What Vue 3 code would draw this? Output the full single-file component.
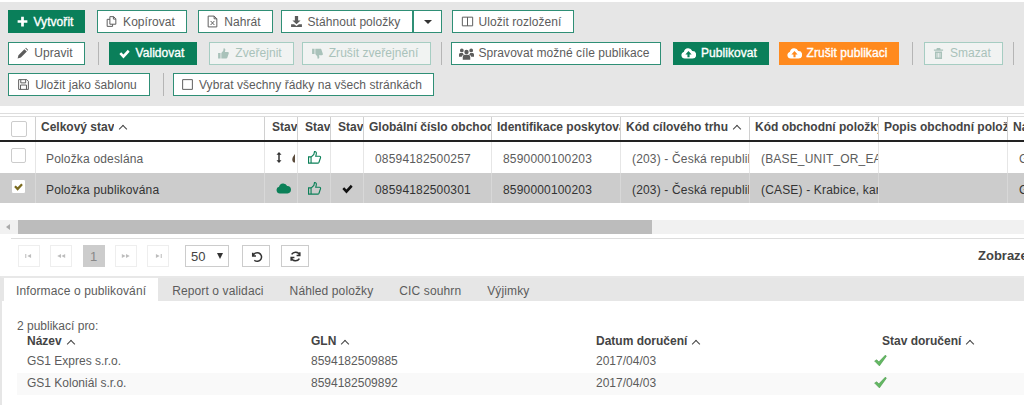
<script setup>
const ic = {
  plus: 'M9.5 3h5v6.5H21v5h-6.5V21h-5v-6.5H3v-5h6.5z',
  check: 'M2.5 13l3.4-3.4 4.2 4.2 8-8.6 3.4 3.4L10.1 21z',
  pencil: 'M3 21l1.5-6L15.5 4l4.5 4.5L9 19.500zM17 2.500l1.500-1 4 4-1 1.500z',
  up: 'M2 11h4.500v10H2zM8 11l3.500-4 .8-4.500c2.700-.3 3.500 2 2.900 4l-.7 2.500H20c1.600 0 2.300 1.400 1.800 2.700L19 20c-.4.800-1 1-2 1H8z',
  down: 'M2 3h4.500v10H2zM8 13l3.500 4 .8 4.500c2.700.3 3.500-2 2.900-4l-.7-2.500H20c1.600 0 2.300-1.400 1.800-2.700L19 4c-.4-.8-1-1-2-1H8z',
  users: 'M12 6a3.500 3.500 0 1 1 0 7 3.500 3.500 0 0 1 0-7zM4.500 4a3 3 0 1 1 0 6 3 3 0 0 1 0-6zM19.500 4a3 3 0 1 1 0 6 3 3 0 0 1 0-6zM6 22v-4c0-3 2-4 3-4h6c1 0 3 1 3 4v4zM0 17v-3c0-2 1-3 2.500-3h3.500c.5 1 1 2 2 2.500-2 .8-3.500 2-3.500 3.500zM24 17v-3c0-2-1-3-2.500-3H18c-.5 1-1 2-2 2.500 2 .8 3.500 2 3.500 3.500z',
  upload: 'M6 20a5.500 5.500 0 0 1-1.300-10.800A7 7 0 0 1 18 8a6 6 0 0 1 .5 12zM12 8l-5 5.500h3.300V18h3.400v-4.500H17z',
  cloud: 'M6 20a5.500 5.500 0 0 1-1.300-10.800A7 7 0 0 1 18 8a6 6 0 0 1 .5 12z',
  trash: 'M9 2h6l1 2.500h4.500v2.500h-17V4.500H8zM5.500 8.500h13V22h-13zM8.500 11v8.500h1.500V11zM11.300 11v8.500h1.500V11zM14 11v8.500h1.500V11z',
  download: 'M9 2h6v8h4.500L12 17 4.500 10H9zM2 17h5.500l4.500 3.500 4.500-3.500H22v5H2z',
  arrows: 'M12 1l5 5.500h-3.500v11H17l-5 5.500-5-5.500h3.500v-11H7z',
  sb: 'M3 7h2.500v10H3zM17 7v10l-9-5z',
  rw: 'M12 7v10l-9-5zM22 7v10l-9-5z',
  ff: 'M2 7v10l9-5zM12 7v10l9-5z',
  se: 'M18.500 7H21v10h-2.500zM7 7v10l9-5z'
}
const st = {
  copy: 'M9 3h7l4 4v10h-11zM15.500 3v4.500H20M9 8H4v13h10v-4',
  file: 'M4 2h11l5 5v15H4zM15 2v5h5M8.500 11l7 7.500M15.500 11l-7 7.500',
  cols: 'M2.500 4h19v16h-19zM12 4v16',
  save: 'M3 3h15l3 3v15H3zM7 3v6h9V3M6.500 21v-8h11v8',
  box: 'M3 3h18v18H3z',
  tup: 'M2.500 11h4v10h-4zM6.500 11.500L11 7l1-4.500c2.500-.3 3.500 2 2.800 4.200L14 10h6c1.500 0 2 1.400 1.600 2.500L19 20c-.3.800-1 1-2 1H6.500',
  undo: 'M5 5v6h6M5.500 11A8 8 0 1 1 8 19',
  sync: 'M20 4v6h-6M20 9.500A8.500 8.500 0 0 0 4.800 8M4 20v-6h6M4 14.500A8.500 8.500 0 0 0 19.200 16'
}
const rows = [
  [
    { t: 'Vytvořit', i: 'plus', k: 'solid', w: 77, m: 0 },
    { t: 'Kopírovat', s: 'copy', w: 90, m: 12 },
    { t: 'Nahrát', s: 'file', w: 75, m: 11 },
    { t: 'Stáhnout položky', i: 'download', w: 132, m: 8 },
    { caret: true, w: 29, m: 0 },
    { t: 'Uložit rozložení', s: 'cols', w: 122, m: 10 }
  ],
  [
    { t: 'Upravit', i: 'pencil', w: 77, m: 0 },
    { sep: true, m: 13 },
    { t: 'Validovat', i: 'check', k: 'solid', w: 88, m: 10 },
    { t: 'Zveřejnit', i: 'up', k: 'off', w: 85, m: 12 },
    { t: 'Zrušit zveřejnění', i: 'down', k: 'off', w: 129, m: 8 },
    { sep: true, m: 10 },
    { t: 'Spravovat možné cíle publikace', i: 'users', w: 210, m: 9, wide: true },
    { t: 'Publikovat', i: 'upload', k: 'solid', w: 96, m: 12, wide: true },
    { t: 'Zrušit publikaci', i: 'upload', k: 'warn', w: 120, m: 10, wide: true },
    { sep: true, m: 13 },
    { t: 'Smazat', i: 'trash', k: 'off', w: 79, m: 11 },
    { sep: true, m: 10 }
  ],
  [
    { t: 'Uložit jako šablonu', s: 'save', w: 142, m: 0 },
    { sep: true, m: 13 },
    { t: 'Vybrat všechny řádky na všech stránkách', s: 'box', w: 261, m: 9 }
  ]
]
const heads = [
  { t: 'Celkový stav', sort: true },
  { t: 'Stav', c: true }, { t: 'Stav', c: true }, { t: 'Stav', c: true },
  { t: 'Globální číslo obchodní položky' },
  { t: 'Identifikace poskytovatele' },
  { t: 'Kód cílového trhu', sort: true },
  { t: 'Kód obchodní položky' },
  { t: 'Popis obchodní položky' },
  { t: 'Název' }
]
const items = [
  { sel: false, name: 'Položka odeslána', gtin: '08594182500257', code: '(BASE_UNIT_OR_EACH)', g: 'G' },
  { sel: true, name: 'Položka publikována', gtin: '08594182500301', code: '(CASE) - Krabice, karton', g: 'G' }
]
const pager = [
  { i: 'sb' }, { i: 'rw' }, { n: '1' }, { i: 'ff' }, { i: 'se' }
]
const tabs = ['Informace o publikování', 'Report o validaci', 'Náhled položky', 'CIC souhrn', 'Výjimky']
const pubs = [
  { n: 'GS1 Expres s.r.o.', g: '8594182509885', d: '2017/04/03' },
  { n: 'GS1 Koloniál s.r.o.', g: '8594182509892', d: '2017/04/03' }
]
const pubHeads = ['Název', 'GLN', 'Datum doručení', 'Stav doručení']
</script>

<template>
  <div class="page">
    <section class="panel">
      <div v-for="(row, r) in rows" :key="r" class="barrow">
        <template v-for="(b, j) in row" :key="j">
          <span v-if="b.sep" class="sep" :style="{ marginLeft: b.m + 'px' }"></span>
          <button v-else class="btn" :class="[b.k, { bare: b.caret }]" :style="{ width: b.w + 'px', marginLeft: b.m + 'px' }">
            <span v-if="b.caret" class="caret"></span>
            <svg v-if="b.i" class="ico" :class="{ wide: b.wide }" viewBox="0 0 24 24"><path :d="ic[b.i]" fill="currentColor" fill-rule="evenodd" /></svg>
            <svg v-if="b.s" class="ico" viewBox="0 0 24 24"><path :d="st[b.s]" fill="none" stroke="currentColor" stroke-width="1.800" /></svg>
            <span v-if="b.t">{{ b.t }}</span>
          </button>
        </template>
      </div>
    </section>

    <section class="gridwrap">
      <div class="grow ghead">
        <div class="gc cb"><span class="box big"></span></div>
        <div v-for="(h, i) in heads" :key="i" class="gc hc" :class="{ ctr: h.c }">
          <span class="clip">{{ h.t }}</span><span v-if="h.sort" class="chev"></span>
        </div>
      </div>
      <div v-for="it in items" :key="it.gtin" class="grow body" :class="{ sel: it.sel }">
        <div class="gc cb"><span class="box" :class="{ on: it.sel }">
          <svg v-if="it.sel" viewBox="0 0 24 24"><path :d="ic.check" fill="#7a6a1e" /></svg>
        </span></div>
        <div class="gc bc name">{{ it.name }}</div>
        <div class="gc ic1">
          <svg v-if="it.sel" class="cl" viewBox="0 3 24 18"><path :d="ic.cloud" fill="#0b8058" /></svg>
          <template v-else>
            <svg class="ar" viewBox="0 0 24 24"><path :d="ic.arrows" fill="#333" /></svg>
            <span class="clipdrop"><svg viewBox="0 0 24 24"><path d="M12 2c4 5 7 9 7 13a7 7 0 0 1-14 0c0-4 3-8 7-13z" fill="#5a4a3a" /></svg></span>
          </template>
        </div>
        <div class="gc ic1"><svg class="th" viewBox="0 0 24 24"><path :d="st.tup" fill="none" stroke="#0b8058" stroke-width="1.800" /></svg></div>
        <div class="gc ic1"><svg v-if="it.sel" class="ck" viewBox="0 0 24 24"><path :d="ic.check" fill="#111" /></svg></div>
        <div class="gc bc">{{ it.gtin }}</div>
        <div class="gc bc">8590000100203</div>
        <div class="gc bc">(203) - Česká republika</div>
        <div class="gc bc">{{ it.code }}</div>
        <div class="gc bc"></div>
        <div class="gc bc">{{ it.g }}</div>
      </div>
      <div class="scroll">
        <span class="sarrow"></span>
        <span class="thumb"></span>
      </div>
    </section>

    <section class="pager">
      <div v-for="(p, i) in pager" :key="i" class="pg" :class="{ cur: p.n }">
        <svg v-if="p.i" viewBox="0 0 24 24"><path :d="ic[p.i]" fill="#bdbdbd" /></svg>
        <span v-else>{{ p.n }}</span>
      </div>
      <div class="size"><span>50</span><span class="tri"></span></div>
      <div class="act first"><svg viewBox="0 0 24 24"><path :d="st.undo" fill="none" stroke="#333" stroke-width="2.800" /></svg></div>
      <div class="act"><svg viewBox="0 0 24 24"><path :d="st.sync" fill="none" stroke="#333" stroke-width="2.800" /></svg></div>
      <div class="info">Zobrazeno 1 - 2 z 2</div>
    </section>

    <section class="detail">
      <div class="tabs">
        <div v-for="(t, i) in tabs" :key="t" class="tab" :class="{ active: i === 0 }">{{ t }}</div>
      </div>
      <div class="dbody">
        <div class="cnt">2 publikací pro:</div>
        <div class="prow phead">
          <div v-for="h in pubHeads" :key="h">{{ h }}<span class="chev"></span></div>
        </div>
        <div v-for="(p, i) in pubs" :key="p.g" class="prow" :class="{ odd: i === 1 }">
          <div>{{ p.n }}</div>
          <div>{{ p.g }}</div>
          <div>{{ p.d }}</div>
          <div class="okc"><svg viewBox="0 0 24 24"><path d="M1 13l4-2.500 4 4L21 2l2 2L10 22z" fill="#63b863" stroke="#3d8b3d" stroke-width=".8" /></svg></div>
        </div>
      </div>
    </section>
  </div>
</template>

<style>
html, body { margin: 0; background: #fff; }
</style>

<style scoped>
.page {
  width: 1024px; height: 405px; overflow: hidden; background: #fff;
  font-family: "Liberation Sans", Arial, sans-serif; font-size: 12px; color: #5c5c5c;
  display: flex; flex-direction: column;
}
.panel { margin-top: 2px; height: 104px; box-sizing: border-box; padding: 8px 0 0 8px; background: #e6e6e6; }
.barrow { display: flex; align-items: center; height: 23px; margin-bottom: 8.5px; }
.btn {
  box-sizing: border-box; height: 23px; padding: 0 4px 0 0; background: #fff; border: 1px solid #2f8f76;
  font: inherit; color: #5c5c5c; letter-spacing: .05px; display: flex; align-items: center; justify-content: center; gap: 5px;
}
.btn.bare { padding: 0; }
.ico { width: 13px; height: 13px; flex: none; }
.ico.wide { width: 15px; height: 15px; }
.btn.solid { background: #0a7f5a; border-color: #0a7f5a; color: #fff; -webkit-text-stroke: .35px #fff; }
.btn.warn { background: #ff8a1e; border-color: #ff8a1e; color: #fff; -webkit-text-stroke: .35px #fff; }
.btn.off { background: #f1f3f2; border-color: #a6cdc2; color: #a9c2ba; }
.caret { width: 0; height: 0; border: 4px solid transparent; border-top-color: #333; border-bottom: 0; }
.sep { width: 1px; height: 23px; background: #b5b5b5; }

.gridwrap { margin-top: 7px; border-top: 1px solid #ddd; padding-top: 2px; }
.grow {
  display: grid; width: 1060px;
  grid-template-columns: 36px 229px 33px 33px 33px 128px 129px 129px 129px 129px 52px;
}
.gc { overflow: hidden; white-space: nowrap; box-sizing: border-box; border-right: 1px solid #ddd; display: flex; align-items: center; }
.ghead { height: 26px; border-top: 1px solid #ddd; border-bottom: 2px solid #222; box-sizing: border-box; }
.ghead .gc { border-right-color: #d0d0d0; }
.hc { padding: 0 0 4px 5px; font-weight: bold; color: #444; }
.hc.ctr { padding-left: 7px; }
.clip { white-space: nowrap; overflow: hidden; }
.chev {
  display: inline-block; width: 5px; height: 5px; margin-left: 6px; flex: none;
  border-left: 1.500px solid #444; border-top: 1.500px solid #444; transform: translateY(2px) rotate(45deg);
}
.cb { justify-content: center; }
.box { box-sizing: border-box; width: 15px; height: 15px; background: #fff; border: 1px solid #ccc; border-radius: 2px; display: flex; align-items: center; justify-content: center; }
.box.big { width: 16px; height: 16px; position: relative; left: 1px; }
.box svg { width: 11px; height: 11px; }
.body .box { position: relative; top: -2px; left: 1px; }
.body { height: 31px; letter-spacing: .17px; }
.body .gc { border-right-color: #e6e6e6; }
.body.sel { background: #ccc; color: #333; height: 30px; }
.body.sel .gc { border-right-color: #d8d8d8; }
.bc { padding: 3px 0 0 11px; }
.bc.name { padding-left: 10px; }
.ic1 { justify-content: center; }
.ar { width: 12px; height: 15px; margin-left: 6px; }
.clipdrop { width: 5px; height: 12px; overflow: hidden; margin-left: 5px; }
.clipdrop svg { width: 11px; height: 12px; display: block; }
.cl { width: 15px; height: 11px; margin-left: 5px; }
.th { width: 15px; height: 15px; }
.ck { width: 13px; height: 13px; }
.scroll { position: relative; margin-top: 17px; height: 14px; background: #f1f1f1; }
.sarrow { position: absolute; left: 6px; top: 4px; width: 0; height: 0; border: 3.500px solid transparent; border-right: 4px solid #aaa; border-left: 0; }
.thumb { position: absolute; left: 18px; top: 0; bottom: 0; width: 634px; background: #bcbcbc; }

.pager { position: relative; margin-top: 4px; margin-left: 11px; border-top: 1px solid #ddd; height: 38px; box-sizing: border-box; padding: 6px 0 0 7px; display: flex; align-items: flex-start; }
.pg { box-sizing: border-box; width: 22px; height: 22px; margin-right: 10.250px; border: 1px solid #eee; display: flex; align-items: center; justify-content: center; }
.pg svg { width: 10px; height: 10px; }
.pg.cur { background: #ccc; color: #888; font-size: 13px; border-color: #ccc; }
.size { box-sizing: border-box; width: 44px; height: 22px; margin-left: 5.750px; border: 1px solid #ccc; color: #444; padding: 0 5px; display: flex; align-items: center; justify-content: space-between; font-size: 13px; }
.tri { width: 0; height: 0; border: 3.500px solid transparent; border-top: 6px solid #333; border-bottom: 0; }
.act { box-sizing: border-box; width: 28px; height: 22px; margin-left: 11px; border: 1px solid #ccc; display: flex; align-items: center; justify-content: center; }
.act.first { margin-left: 13px; }
.act svg { width: 13px; height: 13px; }
.info { position: absolute; left: 967px; top: 9px; white-space: nowrap; font-weight: bold; font-size: 13px; color: #444; }

.detail { flex: 1; border-top: 2px solid #e8e8e8; border-left: 2px solid #e6e6e6; }
.tabs { display: flex; height: 23px; background: #e6e6e6; padding-left: 2px; }
.tab { padding: 6px 13px 0; line-height: 15px; color: #5c5c5c; letter-spacing: .12px; }
.tab.active { background: #fff; padding: 6px 12px 0; margin-right: 1px; }
.dbody { padding: 18px 0 0 15px; }
.cnt { height: 14px; line-height: 14px; }
.prow { display: grid; grid-template-columns: 284px 285px 286px 1fr; height: 22px; line-height: 21px; padding-left: 10px; box-sizing: border-box; }
.phead { height: 16px; line-height: 16px; font-weight: bold; color: #444; margin-bottom: 2px; }
.prow.odd { background: #f9f9f9; }
.okc { display: flex; align-items: center; }
.okc svg { width: 15px; height: 13px; position: relative; top: -2px; left: -9px; }
</style>
